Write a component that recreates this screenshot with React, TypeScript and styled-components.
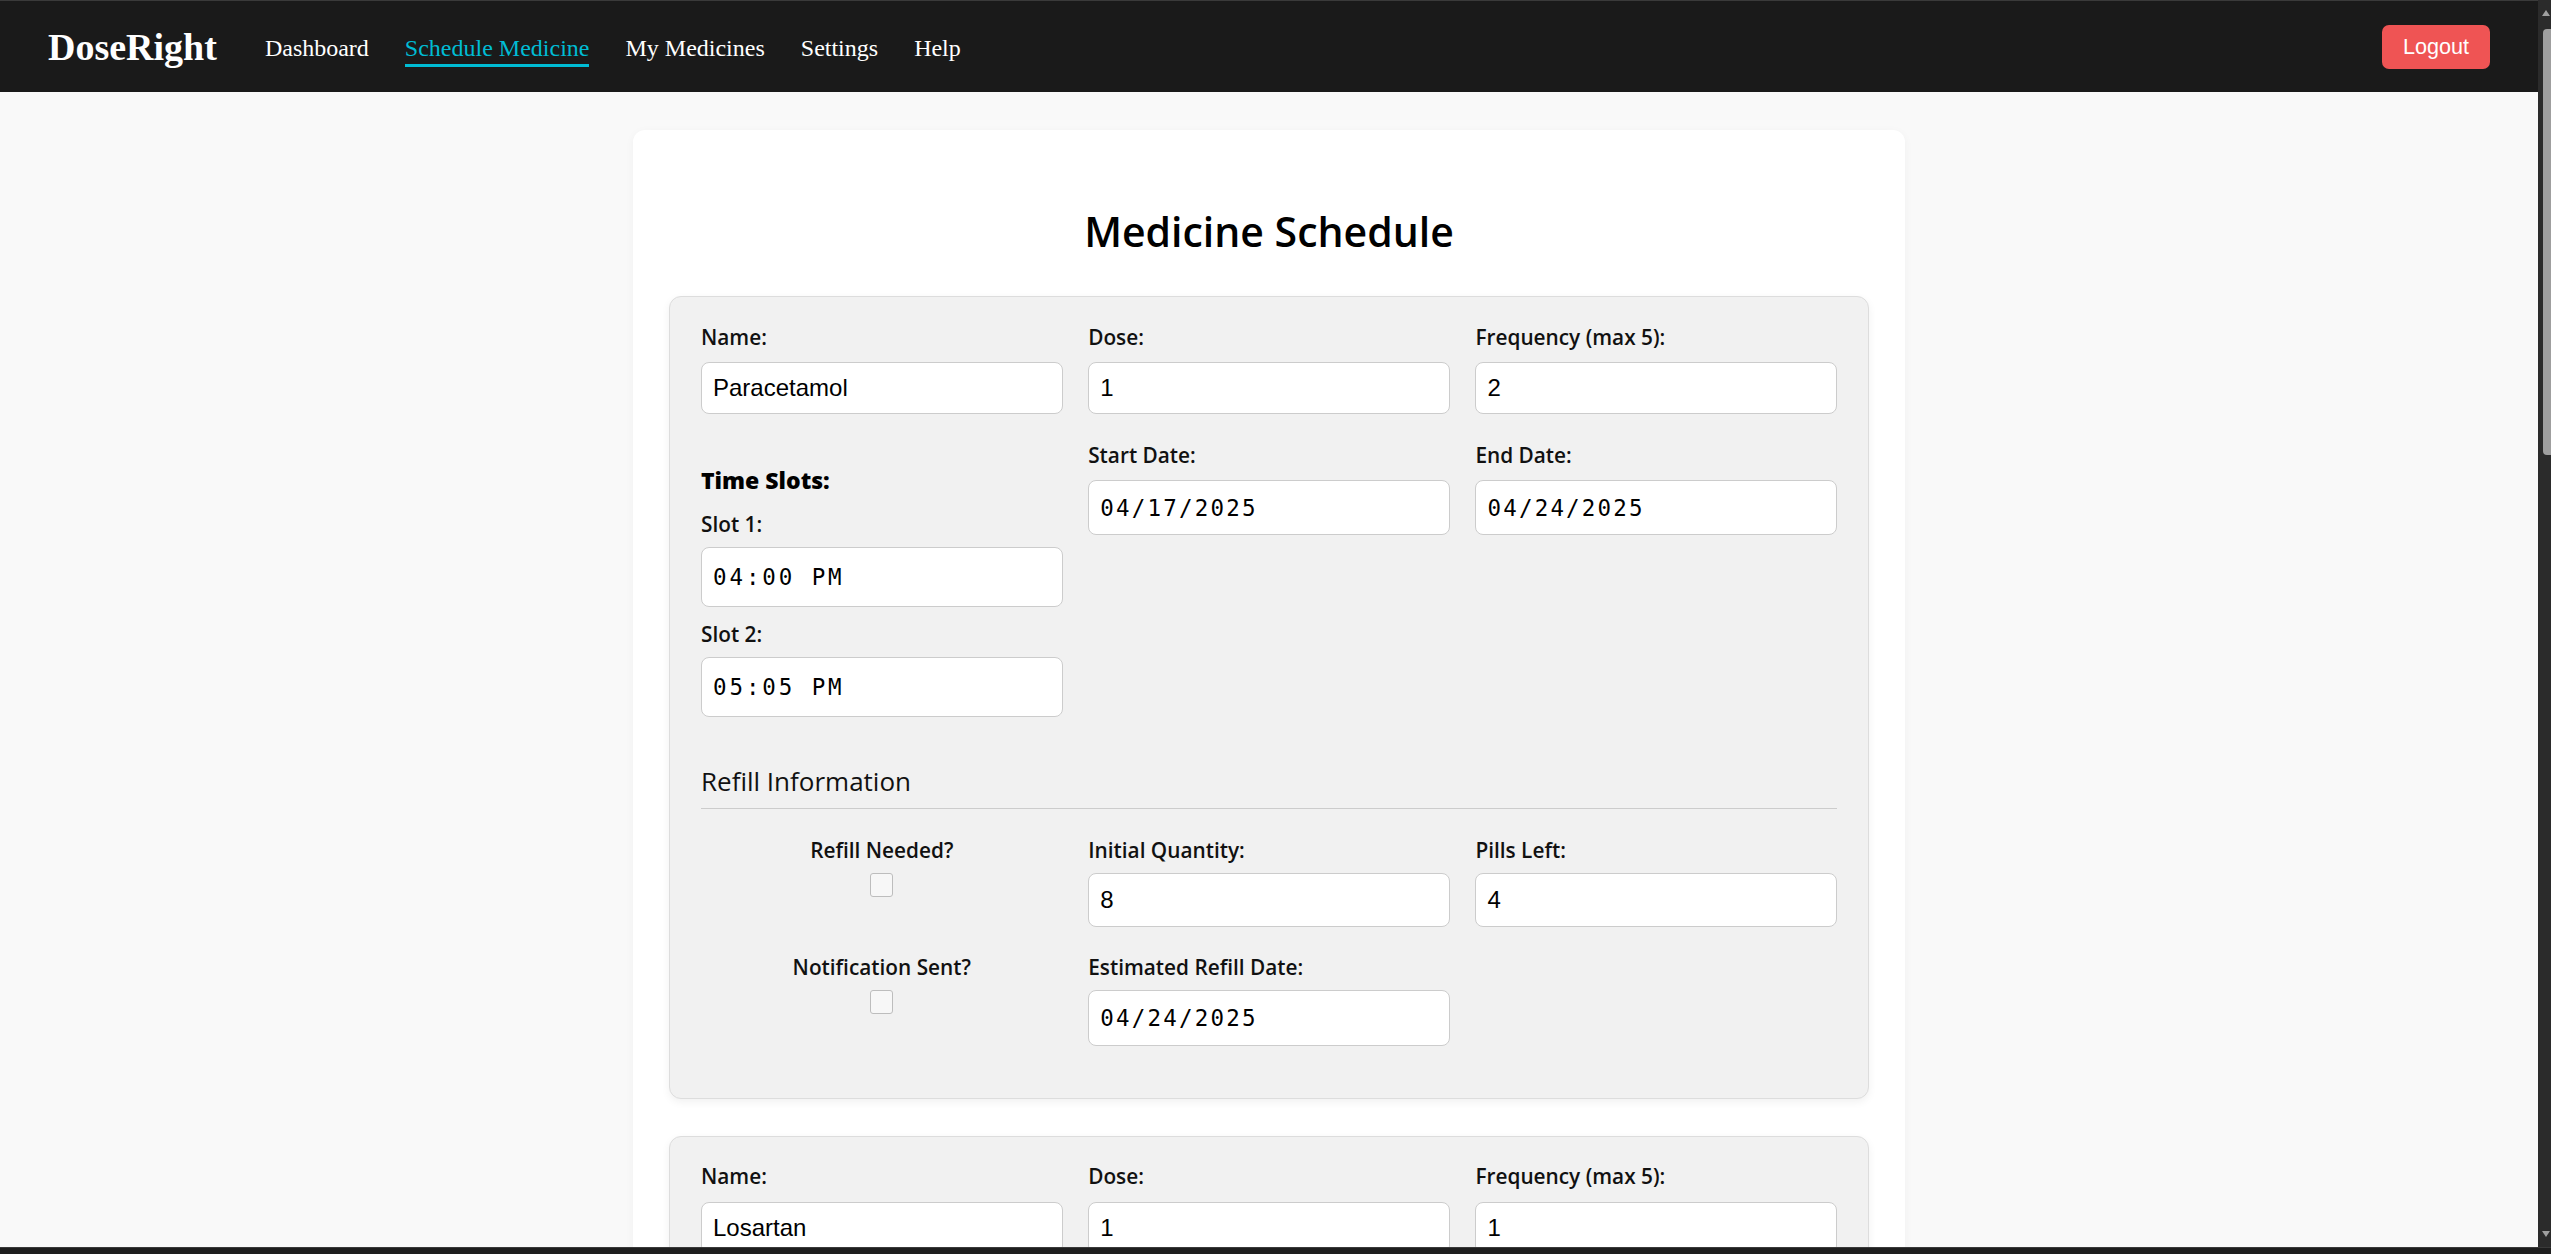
import React from "react";
import styled, { createGlobalStyle } from "styled-components";

const GlobalStyle = createGlobalStyle`
  html { scrollbar-width: none; }
  html, body { background: #f9f9f9; }
  body {
    margin: 0;
    font-family: "Open Sans", "Noto Sans", sans-serif;
    color: #111;
  }
`;

const Page = styled.div`
  margin-right: 13px;
`;

const NavBar = styled.nav`
  display: flex;
  align-items: center;
  box-sizing: border-box;
  height: 92px;
  padding: 0 48px;
  background: #1a1a1a;
  border-top: 1px solid #3a3a3a;
`;

const Logo = styled.div`
  font-family: "Liberation Serif", "Times New Roman", serif;
  font-weight: 700;
  font-size: 38px;
  color: #fff;
  margin-right: 48px;
`;

const NavLinks = styled.div`
  display: flex;
  gap: 36px;
  padding-top: 8px;
`;

const NavLink = styled.a<{ $active?: boolean }>`
  font-family: "Liberation Serif", "Times New Roman", serif;
  font-size: 24px;
  color: ${(p) => (p.$active ? "#00bcd4" : "#ffffff")};
  text-decoration: none;
  padding-bottom: 2px;
  border-bottom: 3px solid ${(p) => (p.$active ? "#00bcd4" : "transparent")};
  cursor: pointer;
`;

const LogoutButton = styled.button`
  margin-left: auto;
  width: 108px;
  height: 44px;
  border: none;
  border-radius: 7px;
  background: #ef5454;
  color: #fff;
  font-family: "Liberation Sans", Arial, sans-serif;
  font-size: 21.6px;
  cursor: pointer;
`;

const Main = styled.main`
  display: flex;
  justify-content: center;
  padding: 38px 0 120px;
`;

const Panel = styled.section`
  width: 1272px;
  box-sizing: border-box;
  background: #ffffff;
  border-radius: 12px;
  padding: 36px;
  box-shadow: 0 2px 10px rgba(0, 0, 0, 0.04);
`;

const Title = styled.h2`
  text-align: center;
  font-size: 41px;
  font-weight: 600;
  line-height: 56px;
  margin: 37px 0 37px;
  color: #000;
`;

const MedCard = styled.div`
  background: #f1f1f1;
  border: 1px solid #dddddd;
  border-radius: 12px;
  padding: 25.6px 31px 52px;
  margin-bottom: 37px;
  box-shadow: 0 3px 8px rgba(0, 0, 0, 0.06);
`;

const Grid = styled.div<{ $rowGap: number }>`
  display: grid;
  grid-template-columns: repeat(3, 1fr);
  column-gap: 25.6px;
  row-gap: ${(p) => p.$rowGap}px;
  align-items: start;
`;

const Field = styled.div<{ $center?: boolean }>`
  display: flex;
  flex-direction: column;
  align-items: ${(p) => (p.$center ? "center" : "stretch")};
`;

const Label = styled.label<{ $gap?: number }>`
  display: block;
  font-size: 20.8px;
  font-weight: 600;
  line-height: 28.3px;
  color: #111;
  margin-bottom: ${(p) => (p.$gap ?? 11)}px;
`;

const Input = styled.input<{ $h: number; $mono?: boolean; $wide?: boolean }>`
  box-sizing: border-box;
  width: 100%;
  height: ${(p) => p.$h}px;
  padding: 0 11px;
  border: 1px solid #cccccc;
  border-radius: 8px;
  background: #ffffff;
  color: #000;
  font-family: ${(p) =>
    p.$mono
      ? '"DejaVu Sans Mono", "Liberation Mono", monospace'
      : '"Liberation Sans", Arial, sans-serif'};
  font-size: ${(p) => (p.$mono ? "22.5px" : "24px")};
  letter-spacing: ${(p) => (p.$wide ? "2.9px" : p.$mono ? "2.2px" : "0")};
  outline: none;
`;

const SlotsBlock = styled.div`
  display: flex;
  flex-direction: column;
`;

const SlotsTitle = styled.h4`
  font-size: 23px;
  font-weight: 800;
  line-height: 30px;
  margin: 24px 0 15px;
  color: #000;
`;

const Slot = styled.div`
  display: flex;
  flex-direction: column;
  & + & {
    margin-top: 12.6px;
  }
`;

const RefillTitle = styled.h3`
  font-size: 26px;
  font-weight: 500;
  line-height: 34px;
  margin: 47px 0 26.6px;
  padding-bottom: 10px;
  border-bottom: 1px solid #cccccc;
  color: #111;
`;

const Check = styled.input`
  appearance: none;
  width: 23px;
  height: 24px;
  margin: 0;
  border: 1.5px solid #bdbdbd;
  border-radius: 3px;
  background: #f7f7f7;
`;

const Actions = styled.div`
  display: flex;
  justify-content: center;
  gap: 24px;
  margin-top: 8px;
`;

const ActionButton = styled.button<{ $primary?: boolean }>`
  padding: 12px 28px;
  border: none;
  border-radius: 8px;
  font-family: "Liberation Sans", Arial, sans-serif;
  font-size: 21px;
  color: #fff;
  background: ${(p) => (p.$primary ? "#00bcd4" : "#4caf50")};
`;

const ScrollTrack = styled.div`
  position: fixed;
  top: 0;
  right: 0;
  bottom: 7px;
  width: 13px;
  background: #2b2b2b;
  &::before,
  &::after {
    content: "";
    position: absolute;
    left: 4px;
    border-left: 4.5px solid transparent;
    border-right: 4.5px solid transparent;
  }
  &::before {
    top: 10px;
    border-bottom: 6px solid #9f9f9f;
  }
  &::after {
    bottom: 10px;
    border-top: 6px solid #9f9f9f;
  }
`;

const ScrollThumb = styled.div`
  position: absolute;
  top: 29px;
  left: 5px;
  right: 0;
  height: 426px;
  background: #9f9f9f;
  border-radius: 4px 0 0 4px;
`;

const WindowEdge = styled.div`
  position: fixed;
  left: 0;
  right: 0;
  bottom: 0;
  height: 6px;
  background: #1e1e1e;
  border-top: 1px solid #3a3a3a;
`;

type Med = {
  name: string;
  dose: string;
  frequency: string;
  slots: string[];
  start: string;
  end: string;
  initial: string;
  left: string;
  refillDate: string;
};

const meds: Med[] = [
  {
    name: "Paracetamol",
    dose: "1",
    frequency: "2",
    slots: ["04:00 PM", "05:05 PM"],
    start: "04/17/2025",
    end: "04/24/2025",
    initial: "8",
    left: "4",
    refillDate: "04/24/2025",
  },
  {
    name: "Losartan",
    dose: "1",
    frequency: "1",
    slots: ["09:00 AM"],
    start: "04/17/2025",
    end: "05/17/2025",
    initial: "30",
    left: "28",
    refillDate: "05/15/2025",
  },
  {
    name: "Metformin",
    dose: "1",
    frequency: "2",
    slots: ["08:00 AM", "08:00 PM"],
    start: "04/18/2025",
    end: "05/18/2025",
    initial: "60",
    left: "56",
    refillDate: "05/16/2025",
  },
];

function MedicineCard({ med }: { med: Med }) {
  return (
    <MedCard>
      <Grid $rowGap={27}>
        <Field>
          <Label>Name:</Label>
          <Input $h={52} defaultValue={med.name} />
        </Field>
        <Field>
          <Label>Dose:</Label>
          <Input $h={52} defaultValue={med.dose} />
        </Field>
        <Field>
          <Label>Frequency (max 5):</Label>
          <Input $h={52} defaultValue={med.frequency} />
        </Field>

        <SlotsBlock>
          <SlotsTitle>Time Slots:</SlotsTitle>
          {med.slots.map((s, i) => (
            <Slot key={i}>
              <Label $gap={9}>Slot {i + 1}:</Label>
              <Input $h={60} $mono $wide defaultValue={s} />
            </Slot>
          ))}
        </SlotsBlock>
        <Field>
          <Label>Start Date:</Label>
          <Input $h={55} $mono defaultValue={med.start} />
        </Field>
        <Field>
          <Label>End Date:</Label>
          <Input $h={55} $mono defaultValue={med.end} />
        </Field>
      </Grid>

      <RefillTitle>Refill Information</RefillTitle>
      <Grid $rowGap={25.6}>
        <Field $center>
          <Label $gap={9}>Refill Needed?</Label>
          <Check type="checkbox" />
        </Field>
        <Field>
          <Label $gap={9}>Initial Quantity:</Label>
          <Input $h={54} defaultValue={med.initial} />
        </Field>
        <Field>
          <Label $gap={9}>Pills Left:</Label>
          <Input $h={54} defaultValue={med.left} />
        </Field>
        <Field $center>
          <Label $gap={9}>Notification Sent?</Label>
          <Check type="checkbox" />
        </Field>
        <Field>
          <Label $gap={9}>Estimated Refill Date:</Label>
          <Input $h={56} $mono defaultValue={med.refillDate} />
        </Field>
      </Grid>
    </MedCard>
  );
}

export default function App() {
  return (
    <>
      <GlobalStyle />
      <Page>
        <NavBar>
          <Logo>DoseRight</Logo>
          <NavLinks>
            <NavLink>Dashboard</NavLink>
            <NavLink $active>Schedule Medicine</NavLink>
            <NavLink>My Medicines</NavLink>
            <NavLink>Settings</NavLink>
            <NavLink>Help</NavLink>
          </NavLinks>
          <LogoutButton>Logout</LogoutButton>
        </NavBar>
        <Main>
          <Panel>
            <Title>Medicine Schedule</Title>
            {meds.map((m) => (
              <MedicineCard key={m.name} med={m} />
            ))}
            <Actions>
              <ActionButton>Add Medicine</ActionButton>
              <ActionButton $primary>Save Schedule</ActionButton>
            </Actions>
          </Panel>
        </Main>
      </Page>
      <ScrollTrack>
        <ScrollThumb />
      </ScrollTrack>
      <WindowEdge />
    </>
  );
}
